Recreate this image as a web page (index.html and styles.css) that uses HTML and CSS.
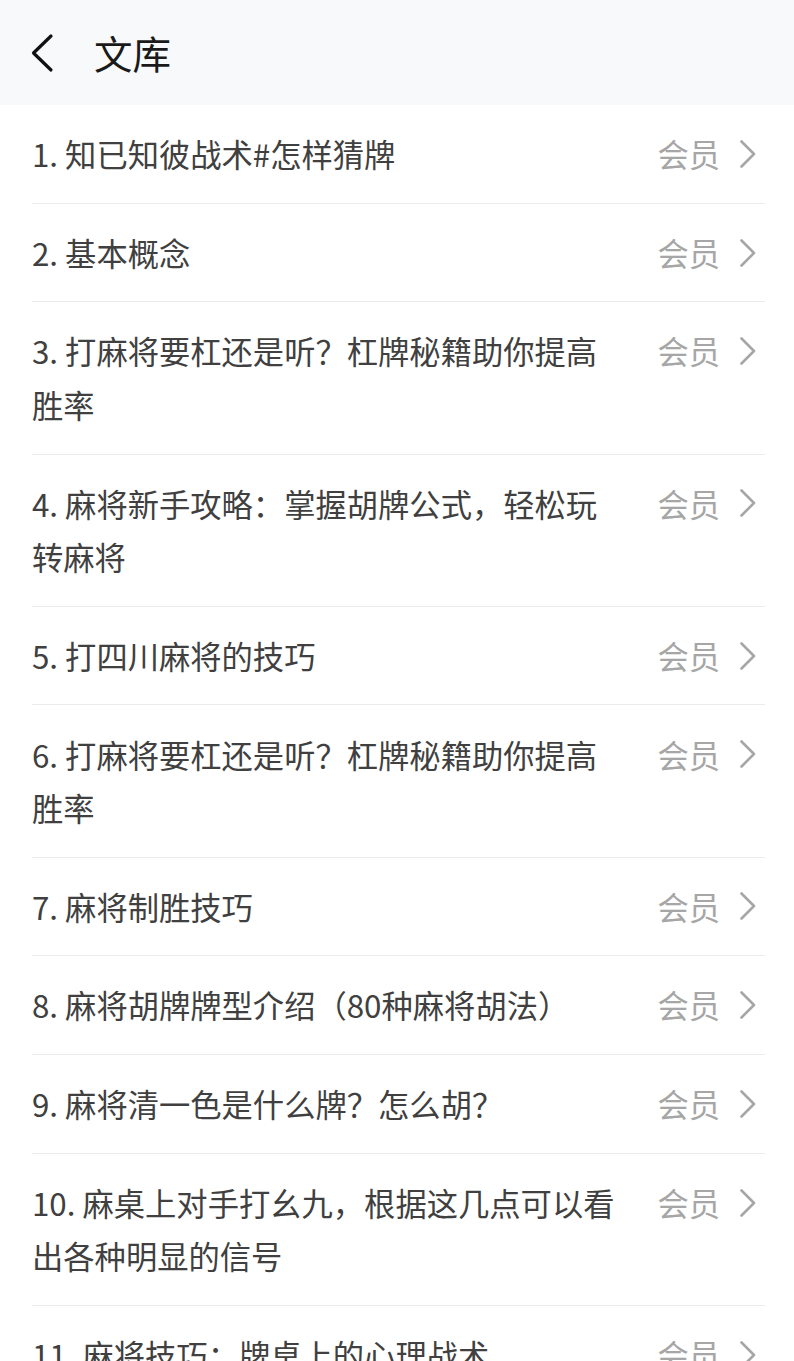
FILE: index.html
```html
<!DOCTYPE html>
<html lang="zh-CN">
<head>
<meta charset="utf-8">
<link rel="stylesheet" href="styles.css">
</head>
<body>
<header class="topbar">
  <svg class="back" width="28" height="40" viewBox="0 0 28 40"><path d="M22 3 L4.5 20 L22 37" fill="none" stroke="#111" stroke-width="3.2" stroke-linecap="round" stroke-linejoin="round"/></svg>
  <h1 class="title">文库</h1>
</header>
<ul class="list">
  <li class="row"><span class="txt">1. 知已知彼战术#怎样猜牌</span><span class="tag">会员</span><svg class="chev" viewBox="0 0 16 28"><path d="M1.5 1.5 L14 14 L1.5 26.5" fill="none" stroke="#a6a6a6" stroke-width="2.6" stroke-linecap="round" stroke-linejoin="round"/></svg></li>
  <li class="row"><span class="txt">2. 基本概念</span><span class="tag">会员</span><svg class="chev" viewBox="0 0 16 28"><path d="M1.5 1.5 L14 14 L1.5 26.5" fill="none" stroke="#a6a6a6" stroke-width="2.6" stroke-linecap="round" stroke-linejoin="round"/></svg></li>
  <li class="row"><span class="txt">3. 打麻将要杠还是听？杠牌秘籍助你提高胜率</span><span class="tag">会员</span><svg class="chev" viewBox="0 0 16 28"><path d="M1.5 1.5 L14 14 L1.5 26.5" fill="none" stroke="#a6a6a6" stroke-width="2.6" stroke-linecap="round" stroke-linejoin="round"/></svg></li>
  <li class="row"><span class="txt">4. 麻将新手攻略：掌握胡牌公式，轻松玩转麻将</span><span class="tag">会员</span><svg class="chev" viewBox="0 0 16 28"><path d="M1.5 1.5 L14 14 L1.5 26.5" fill="none" stroke="#a6a6a6" stroke-width="2.6" stroke-linecap="round" stroke-linejoin="round"/></svg></li>
  <li class="row"><span class="txt">5. 打四川麻将的技巧</span><span class="tag">会员</span><svg class="chev" viewBox="0 0 16 28"><path d="M1.5 1.5 L14 14 L1.5 26.5" fill="none" stroke="#a6a6a6" stroke-width="2.6" stroke-linecap="round" stroke-linejoin="round"/></svg></li>
  <li class="row"><span class="txt">6. 打麻将要杠还是听？杠牌秘籍助你提高胜率</span><span class="tag">会员</span><svg class="chev" viewBox="0 0 16 28"><path d="M1.5 1.5 L14 14 L1.5 26.5" fill="none" stroke="#a6a6a6" stroke-width="2.6" stroke-linecap="round" stroke-linejoin="round"/></svg></li>
  <li class="row"><span class="txt">7. 麻将制胜技巧</span><span class="tag">会员</span><svg class="chev" viewBox="0 0 16 28"><path d="M1.5 1.5 L14 14 L1.5 26.5" fill="none" stroke="#a6a6a6" stroke-width="2.6" stroke-linecap="round" stroke-linejoin="round"/></svg></li>
  <li class="row"><span class="txt">8. 麻将胡牌牌型介绍（80种麻将胡法）</span><span class="tag">会员</span><svg class="chev" viewBox="0 0 16 28"><path d="M1.5 1.5 L14 14 L1.5 26.5" fill="none" stroke="#a6a6a6" stroke-width="2.6" stroke-linecap="round" stroke-linejoin="round"/></svg></li>
  <li class="row"><span class="txt">9. 麻将清一色是什么牌？怎么胡？</span><span class="tag">会员</span><svg class="chev" viewBox="0 0 16 28"><path d="M1.5 1.5 L14 14 L1.5 26.5" fill="none" stroke="#a6a6a6" stroke-width="2.6" stroke-linecap="round" stroke-linejoin="round"/></svg></li>
  <li class="row"><span class="txt">10. 麻桌上对手打幺九，根据这几点可以看出各种明显的信号</span><span class="tag">会员</span><svg class="chev" viewBox="0 0 16 28"><path d="M1.5 1.5 L14 14 L1.5 26.5" fill="none" stroke="#a6a6a6" stroke-width="2.6" stroke-linecap="round" stroke-linejoin="round"/></svg></li>
  <li class="row"><span class="txt">11. 麻将技巧：牌桌上的心理战术</span><span class="tag">会员</span><svg class="chev" viewBox="0 0 16 28"><path d="M1.5 1.5 L14 14 L1.5 26.5" fill="none" stroke="#a6a6a6" stroke-width="2.6" stroke-linecap="round" stroke-linejoin="round"/></svg></li>
</ul>
</body>
</html>
```
FILE: styles.css
```css
html, body {
  margin: 0;
  padding: 0;
  background: #ffffff;
  font-family: "Noto Sans CJK SC", "Noto Sans", sans-serif;
}
.topbar {
  height: 105px;
  background: #f8f9fb;
  display: flex;
  align-items: center;
  padding-left: 29px;
  box-sizing: border-box;
}
.back {
  width: 28px;
  height: 40px;
  flex: none;
}
.title {
  margin: 0 0 0 37px;
  font-size: 38.5px;
  font-weight: 400;
  color: #1a1a1a;
  line-height: 1;
}
.list {
  list-style: none;
  margin: 0 29px 0 32px;
  padding: 0;
}
.row {
  display: flex;
  align-items: flex-start;
  padding: 22.1px 0;
  border-bottom: 1px solid #ebebeb;
}
.txt {
  flex: 1;
  font-size: 31.3px;
  line-height: 53.5px;
  color: #404040;
  margin-right: 40px;
  min-width: 0;
}
.tag {
  flex: none;
  font-size: 31.3px;
  line-height: 53.5px;
  color: #a6a6a6;
}
.chev {
  flex: none;
  width: 16px;
  height: 28px;
  margin: 12.75px 9px 0 20px;
}
```
